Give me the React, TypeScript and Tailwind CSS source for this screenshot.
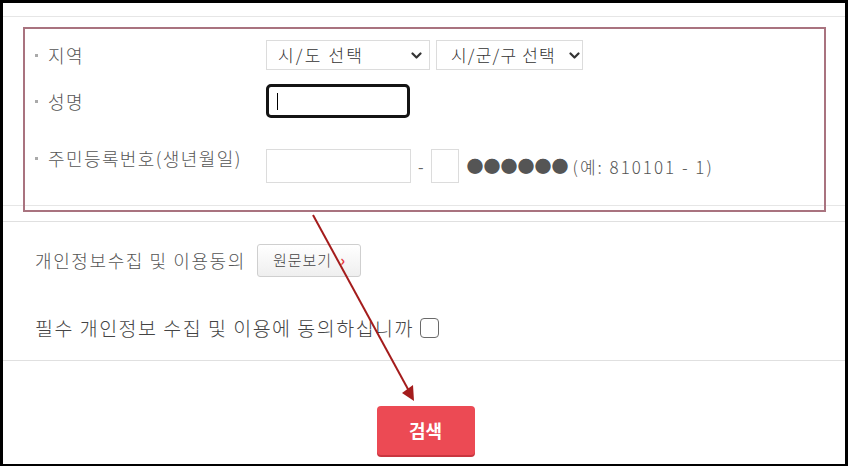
const Chevron = () => (
  <svg className="w-[11px] h-[8px]" viewBox="0 0 11 8" fill="none">
    <path d="M1.5 1.5L5.5 5.5L9.5 1.5" stroke="#333" strokeWidth={2.2} strokeLinecap="round" strokeLinejoin="round" />
  </svg>
);

const Label = ({ children }: { children: React.ReactNode }) => (
  <div className="flex items-center w-[231px] text-[18px] text-[#555] leading-[24px] tracking-[1.4px] font-light">
    <span className="w-[3px] h-[3px] bg-[#aaa] mr-[10px]" />
    {children}
  </div>
);

export default function App() {
  return (
    <div className="w-[848px] h-[466px] bg-black pt-[3px] pl-[3px] pr-[3px] pb-[2px] font-['Noto_Sans_CJK_KR','Noto_Sans',sans-serif]">
      <div className="relative w-full h-full bg-white overflow-hidden">
        {/* form table */}
        <div className="mt-[13px] border-t border-b border-[#e6e6e6] pl-[32px] pt-[23px] pb-[22px]">
          <div className="flex items-center h-[30px]">
            <Label>지역</Label>
            <div className="flex gap-[6px] font-light">
              <div className="relative w-[164px] h-[30px] border border-[#dcdcdc] flex items-center pl-[11px] text-[17px] text-[#333] tracking-[2.2px]">
                시/도 선택
                <span className="absolute right-[7px] top-[11px]">
                  <Chevron />
                </span>
              </div>
              <div className="relative w-[147px] h-[30px] border border-[#dcdcdc] flex items-center pl-[14px] text-[17px] text-[#333] tracking-[1.2px]">
                시/군/구 선택
                <span className="absolute right-[2px] top-[11px]">
                  <Chevron />
                </span>
              </div>
            </div>
          </div>

          <div className="flex items-center h-[34px] mt-[14px]">
            <Label>성명</Label>
            <div className="w-[144px] h-[34px] border-[3px] border-[#141414] rounded-[5px] flex items-center pl-[8px]">
              <span className="w-px h-[17px] bg-black" />
            </div>
          </div>

          <div className="flex items-start h-[34px] mt-[31px]">
            <div className="-mt-[3px]">
              <Label>주민등록번호(생년월일)</Label>
            </div>
            <div className="w-[145px] h-[34px] border border-[#dcdcdc]" />
            <span className="mx-[7px] mt-[5px] text-[16px] text-[#666]">-</span>
            <div className="w-[28px] h-[34px] border border-[#dcdcdc]" />
            <span className="ml-[8px] mt-[4px] text-[17px] text-[#555]">●●●●●●</span>
            <span className="ml-[4px] mt-[5px] text-[17px] text-[#555] tracking-[2px] font-light">(예: 810101 - 1)</span>
          </div>
        </div>

        {/* agreement */}
        <div className="mt-[15px] border-t border-b border-[#e0e0e0] pl-[32px] h-[140px] font-light">
          <div className="flex items-center mt-[22px] h-[33px] text-[18px] text-[#555]">
            <span className="tracking-[1.6px]">개인정보수집 및 이용동의</span>
            <button className="ml-[11px] w-[104px] h-[33px] border border-[#cfcfcf] rounded-[3px] bg-gradient-to-b from-white to-[#efefef] flex items-center pl-[15px] text-[15px] text-[#444] tracking-[1px]">
              원문보기
              <span className="ml-[8px] text-[#e8383f] text-[15px] font-bold">›</span>
            </button>
          </div>
          <div className="flex items-center mt-[36px] text-[19.5px] text-[#444]">
            <span className="tracking-[1.5px]">필수 개인정보 수집 및 이용에 동의하십니까</span>
            <span className="ml-[6px] w-[19px] h-[20px] border-[1.5px] border-[#6a6a6a] rounded-[4px]" />
          </div>
        </div>

        {/* search button */}
        <div className="flex justify-center pl-[3px] mt-[45px]">
          <button className="w-[98px] h-[49px] rounded-[4px] bg-[#ec4a54] shadow-[0_2px_0_#c9363f] text-white text-[18px] font-bold">
            검색
          </button>
        </div>

        {/* annotation overlay */}
        <div className="absolute left-[20px] top-[24px] w-[803px] h-[185px] border-2 border-[#a9737f] pointer-events-none" />
        <svg className="absolute left-0 top-0 pointer-events-none" width="842" height="461">
          <line x1="310" y1="212" x2="406" y2="388" stroke="#a41c1c" strokeWidth={2} />
          <polygon points="411,398 399,390 410,382" fill="#a41c1c" />
        </svg>
      </div>
    </div>
  );
}
